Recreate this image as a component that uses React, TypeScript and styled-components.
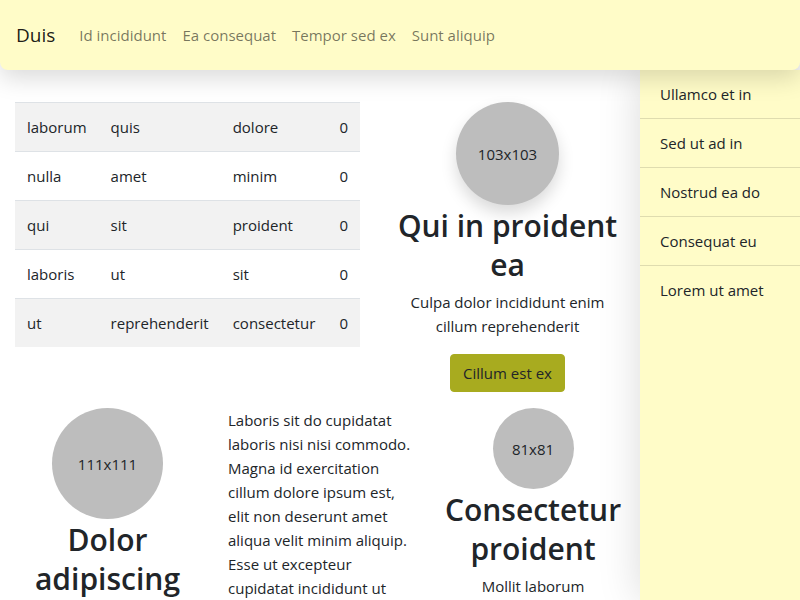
import React from "react";
import styled, { createGlobalStyle } from "styled-components";

const Global = createGlobalStyle`
  html, body { margin: 0; padding: 0; }
  body {
    font-family: "Open Sans", "Noto Sans", sans-serif;
    font-size: 15px;
    line-height: 24px;
    color: #212529;
    background: #ffffff;
    overflow: hidden;
  }
  * { box-sizing: border-box; }
`;

const Page = styled.div`
  width: 800px;
  height: 600px;
  display: flex;
  flex-direction: column;
  overflow: hidden;
`;

const Navbar = styled.nav`
  position: relative;
  z-index: 2;
  height: 70px;
  flex: none;
  display: flex;
  align-items: center;
  padding: 0 16px;
  background: #fffcc8;
  border-radius: 0 0 8px 8px;
  box-shadow: 0 8px 24px rgba(0, 0, 0, 0.15);
`;

const Brand = styled.a`
  font-size: 19px;
  line-height: 30px;
  color: rgba(0, 0, 0, 0.9);
  margin-right: 16px;
  text-decoration: none;
`;

const NavLink = styled.a`
  font-size: 15px;
  line-height: 24px;
  padding: 8px;
  color: rgba(0, 0, 0, 0.55);
  text-decoration: none;
`;

const Body = styled.div`
  flex: 1;
  display: flex;
  min-height: 0;
`;

const Main = styled.main`
  width: 640px;
  flex: none;
  padding: 32px 0 0 15px;
  display: flex;
  flex-direction: column;
  gap: 16px;
`;

const TopRow = styled.div`
  display: grid;
  grid-template-columns: 345px 255px;
  column-gap: 20px;
  align-items: start;
`;

const BottomRow = styled.div`
  display: grid;
  grid-template-columns: 185px 230px 206px;
  column-gap: 0;
  align-items: start;
`;

const Table = styled.table`
  border-collapse: collapse;
  width: auto;
`;

const Row = styled.tr<{ $striped: boolean }>`
  background: ${(p) => (p.$striped ? "#f2f2f2" : "transparent")};
  border-top: 1px solid #dee2e6;
`;

const Cell = styled.td`
  padding: 12px;
  line-height: 24px;
  white-space: nowrap;
`;

const Card = styled.div<{ $pad?: number }>`
  display: flex;
  flex-direction: column;
  align-items: center;
  text-align: center;
  padding: 0 ${(p) => p.$pad ?? 0}px;
`;

const Circle = styled.div<{ $size: number; $shadow?: boolean }>`
  width: ${(p) => p.$size}px;
  height: ${(p) => p.$size}px;
  border-radius: 50%;
  background: #bdbdbd;
  display: flex;
  align-items: center;
  justify-content: center;
  font-size: 15px;
  color: #212529;
  flex: none;
  box-shadow: ${(p) => (p.$shadow ? "0 8px 16px rgba(0,0,0,0.15)" : "none")};
`;

const Title = styled.h2`
  font-size: 30px;
  font-weight: 600;
  line-height: 38.5px;
  margin: 2px 0 6px;
`;

const Text = styled.p`
  margin: 0 0 16px;
  line-height: 24px;
`;

const Button = styled.button`
  font-family: inherit;
  font-size: 15px;
  line-height: 24px;
  padding: 6px 12px;
  background: #a8ab1f;
  color: #212529;
  border: 1px solid #a8ab1f;
  border-radius: 4px;
`;

const Paragraph = styled.p`
  margin: 0;
  padding: 0 12px 0 28px;
  line-height: 24px;
`;

const Sidebar = styled.aside`
  position: relative;
  z-index: 1;
  width: 160px;
  flex: none;
  background: #fffcc8;
  box-shadow: 0 0 40px rgba(0, 0, 0, 0.15);
  display: flex;
  flex-direction: column;
`;

const SideItem = styled.a`
  padding: 12px 20px;
  line-height: 24px;
  color: #212529;
  text-decoration: none;
  border-bottom: 1px solid rgba(0, 0, 0, 0.125);
  &:last-child {
    border-bottom: none;
  }
`;

const tableData = [
  ["laborum", "quis", "dolore", "0"],
  ["nulla", "amet", "minim", "0"],
  ["qui", "sit", "proident", "0"],
  ["laboris", "ut", "sit", "0"],
  ["ut", "reprehenderit", "consectetur", "0"],
];

const navLinks = ["Id incididunt", "Ea consequat", "Tempor sed ex", "Sunt aliquip"];
const sideLinks = ["Ullamco et in", "Sed ut ad in", "Nostrud ea do", "Consequat eu", "Lorem ut amet"];

export default function App() {
  return (
    <Page>
      <Global />
      <Navbar>
        <Brand href="#">Duis</Brand>
        {navLinks.map((l) => (
          <NavLink key={l} href="#">
            {l}
          </NavLink>
        ))}
      </Navbar>
      <Body>
        <Main>
          <TopRow>
            <Table>
              <tbody>
                {tableData.map((r, i) => (
                  <Row key={i} $striped={i % 2 === 0}>
                    {r.map((c, j) => (
                      <Cell key={j}>{c}</Cell>
                    ))}
                  </Row>
                ))}
              </tbody>
            </Table>
            <Card $pad={12}>
              <Circle $size={103} $shadow>
                103x103
              </Circle>
              <Title>Qui in proident ea</Title>
              <Text>Culpa dolor incididunt enim cillum reprehenderit</Text>
              <Button>Cillum est ex</Button>
            </Card>
          </TopRow>
          <BottomRow>
            <Card>
              <Circle $size={111}>111x111</Circle>
              <Title>Dolor adipiscing</Title>
            </Card>
            <Paragraph>
              Laboris sit do cupidatat laboris nisi nisi commodo. Magna id exercitation cillum dolore ipsum est,
              elit non deserunt amet aliqua velit minim aliquip. Esse ut excepteur cupidatat incididunt ut
              consequat.
            </Paragraph>
            <Card>
              <Circle $size={81}>81x81</Circle>
              <Title>Consectetur proident</Title>
              <Text>Mollit laborum</Text>
            </Card>
          </BottomRow>
        </Main>
        <Sidebar>
          {sideLinks.map((l) => (
            <SideItem key={l} href="#">
              {l}
            </SideItem>
          ))}
        </Sidebar>
      </Body>
    </Page>
  );
}
